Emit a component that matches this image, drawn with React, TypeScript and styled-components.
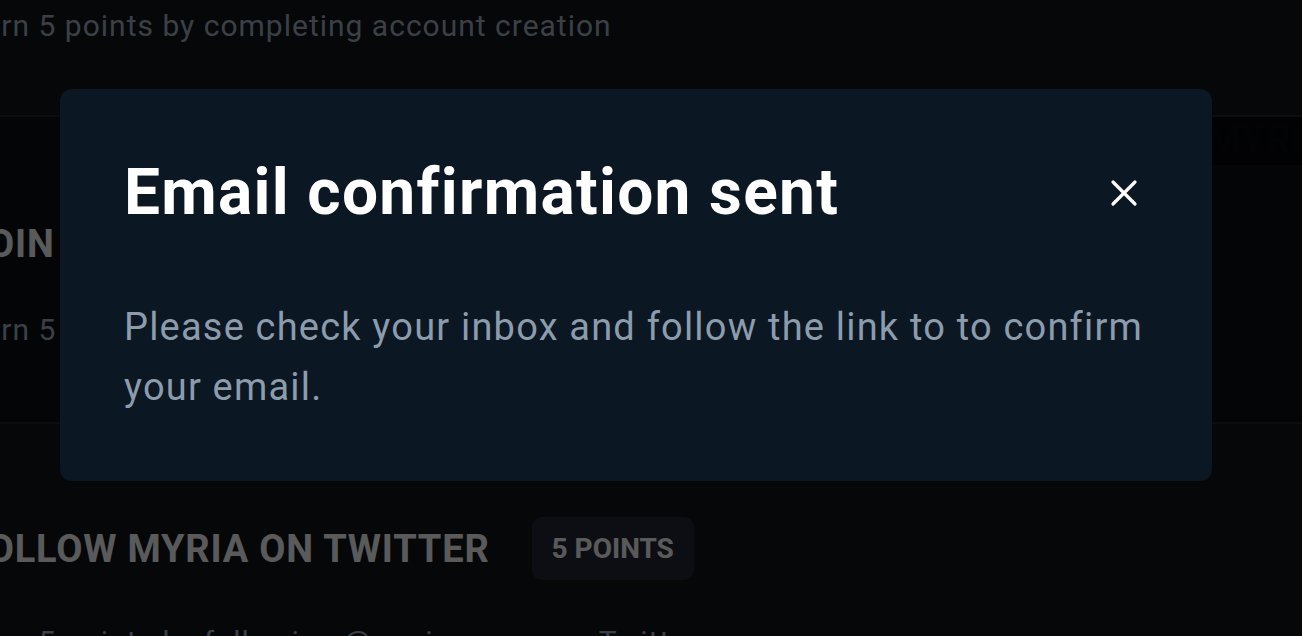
import React from 'react';
import styled, { createGlobalStyle } from 'styled-components';

const GlobalStyle = createGlobalStyle`
    html, body {
        margin: 0;
        padding: 0;
        background: #0d1218;
        overflow: hidden;
    }
    body {
        font-family: Roboto, 'Noto Sans', 'Liberation Sans', sans-serif;
    }
`;

const tasks = [
    {
        title: 'JOIN MYRIA DISCORD',
        description: 'Earn 5 points by joining the Myria Discord server',
        points: 5,
        highlighted: true,
    },
    {
        title: 'FOLLOW MYRIA ON TWITTER',
        description: 'Earn 5 points by following @myriagames on Twitter',
        points: 5,
        highlighted: false,
    },
];

const CloseIcon: React.FC = () => (
    <svg width="28" height="28" viewBox="0 0 28 28" fill="none">
        <path d="M3 3 L25 25 M25 3 L3 25" stroke="#ffffff" strokeWidth="3.2" strokeLinecap="round" />
    </svg>
);

const App: React.FC = () => {
    return (
        <>
            <GlobalStyle />
            <Page>
                <Intro>Earn 5 points by completing account creation</Intro>

                {tasks.map(task => (
                    <TaskCard key={task.title} highlighted={task.highlighted}>
                        {task.highlighted && (
                            <TopRow>
                                <DarkTag>MYRIA</DarkTag>
                            </TopRow>
                        )}
                        <TaskHeader highlighted={task.highlighted}>
                            <TaskTitle>{task.title}</TaskTitle>
                            {!task.highlighted && <PointsBadge>{task.points} POINTS</PointsBadge>}
                        </TaskHeader>
                        <TaskText>{task.description}</TaskText>
                    </TaskCard>
                ))}
            </Page>

            <Overlay>
                <Modal role="dialog">
                    <ModalHeader>
                        <ModalTitle>Email confirmation sent</ModalTitle>
                        <CloseButton aria-label="Close">
                            <CloseIcon />
                        </CloseButton>
                    </ModalHeader>
                    <ModalBody>Please check your inbox and follow the link to to confirm your email.</ModalBody>
                </Modal>
            </Overlay>
        </>
    );
};

export default App;

const Page = styled.div`
    display: flex;
    flex-direction: column;
    margin-left: -34px;
    padding-top: 5px;
    width: 1400px;
`;

const Intro = styled.p`
    margin: 0;
    font-size: 30px;
    line-height: 42px;
    letter-spacing: 1px;
    color: #94a0af;
`;

const TaskCard = styled.div<{ highlighted: boolean }>`
    display: flex;
    flex-direction: column;
    margin-top: ${p => (p.highlighted ? '68px' : '93px')};
    padding-bottom: ${p => (p.highlighted ? '72px' : '0')};
    border-top: ${p => (p.highlighted ? '2px solid #1c232b' : 'none')};
    border-bottom: ${p => (p.highlighted ? '2px solid #1c232b' : 'none')};
    background: ${p => (p.highlighted ? '#0a0e13' : 'transparent')};
`;

const TopRow = styled.div`
    display: flex;
    justify-content: flex-end;
`;

const DarkTag = styled.div`
    height: 48px;
    width: 160px;
    background: #05070a;
    color: #07090c;
    font-size: 40px;
    font-weight: 700;
    line-height: 48px;
    padding-left: 16px;
`;

const TaskHeader = styled.div<{ highlighted: boolean }>`
    display: flex;
    align-items: center;
    gap: 42px;
    margin-top: ${p => (p.highlighted ? '55px' : '0')};
`;

const TaskTitle = styled.h2`
    margin: 0;
    font-size: 38px;
    line-height: 48px;
    font-weight: 700;
    color: #e2e2e2;
    letter-spacing: 0.8px;
`;

const PointsBadge = styled.span`
    display: inline-flex;
    align-items: center;
    height: 63px;
    padding: 0 20px;
    border-radius: 10px;
    background: #1e2532;
    color: #e2e2e2;
    font-size: 28px;
    font-weight: 700;
`;

const TaskText = styled.p`
    margin: 42px 0 0;
    font-size: 30px;
    line-height: 40px;
    letter-spacing: 1px;
    color: #94a0af;
`;

const Overlay = styled.div`
    position: fixed;
    inset: 0;
    background: rgba(0, 0, 0, 0.6);
    display: flex;
    align-items: flex-start;
    padding: 89px 0 0 60px;
`;

const Modal = styled.div`
    width: 1152px;
    box-sizing: border-box;
    padding: 65px 64px 64px;
    background: #0c1724;
    border-radius: 12px;
    display: flex;
    flex-direction: column;
    gap: 66px;
`;

const ModalHeader = styled.div`
    display: flex;
    align-items: center;
    justify-content: space-between;
`;

const ModalTitle = styled.h1`
    margin: 0;
    font-size: 64px;
    line-height: 77px;
    font-weight: 700;
    letter-spacing: 1.3px;
    color: #ffffff;
`;

const CloseButton = styled.button`
    display: flex;
    align-items: center;
    justify-content: center;
    width: 48px;
    height: 48px;
    padding: 0;
    border: none;
    background: transparent;
    cursor: pointer;
`;

const ModalBody = styled.p`
    margin: 0;
    font-size: 38px;
    line-height: 60px;
    letter-spacing: 1.2px;
    color: #8c9cab;
`;
